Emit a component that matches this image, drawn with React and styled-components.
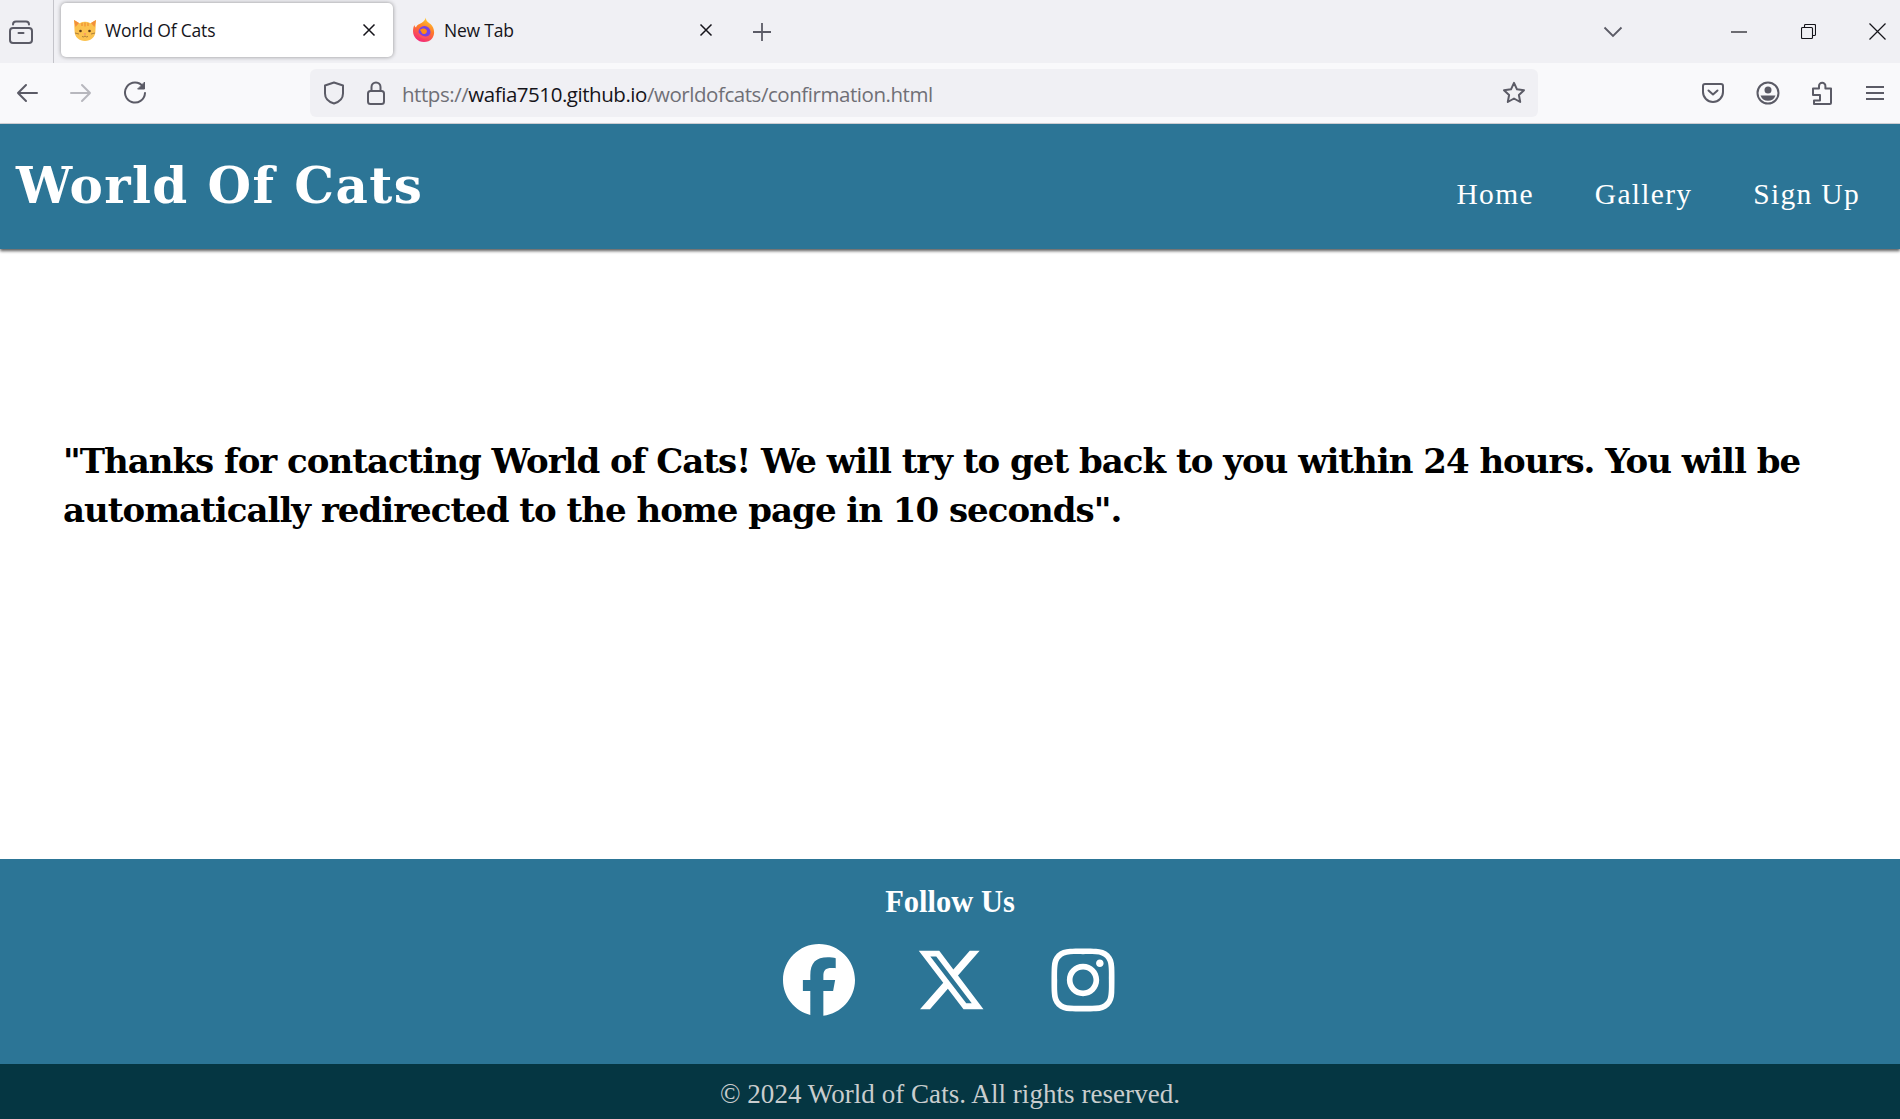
import React from 'react';
import styled, { createGlobalStyle } from 'styled-components';
import { FaFacebook, FaXTwitter, FaInstagram } from 'react-icons/fa6';

const GlobalStyle = createGlobalStyle`
  html, body {
    margin: 0;
    padding: 0;
    background: #fff;
  }
  * {
    box-sizing: border-box;
  }
`;

const Page = styled.div`
  display: flex;
  flex-direction: column;
  height: 1119px;
  overflow: hidden;
`;

const TabStrip = styled.div`
  display: flex;
  align-items: center;
  height: 63px;
  background: #f0f0f4;
  color: #15141a;
`;

const TabsButton = styled.div`
  display: flex;
  align-items: center;
  justify-content: center;
  width: 54px;
  height: 63px;
  padding-right: 12px;
  border-right: 1px solid #c4c4ca;
`;

const Tab = styled.div`
  display: flex;
  align-items: center;
  width: ${props => props.width}px;
  height: 54px;
  margin: 0 0 3px 7px;
  padding: 0 17px 0 12px;
  border-radius: 5px;
  font-family: "Open Sans", sans-serif;
  font-size: 17.5px;
  letter-spacing: -0.2px;
  background: ${props => (props.active ? '#fff' : 'transparent')};
  box-shadow: ${props => (props.active ? '0 0 4px rgba(0, 0, 0, 0.4)' : 'none')};
`;

const TabIcon = styled.span`
  display: flex;
  width: 32px;
  flex-shrink: 0;
`;

const TabTitle = styled.span`
  flex: 1;
  white-space: nowrap;
`;

const PlusButton = styled.div`
  display: flex;
  margin-left: 22px;
`;

const StripSpacer = styled.div`
  flex: 1;
`;

const Chevron = styled.div`
  display: flex;
  margin-right: 93px;
`;

const WindowButtons = styled.div`
  display: flex;
  gap: 23px;
`;

const WindowButton = styled.div`
  display: flex;
  align-items: center;
  justify-content: center;
  width: 46px;
  height: 58px;
`;

const Toolbar = styled.div`
  display: flex;
  align-items: center;
  height: 61px;
  padding-left: 16px;
  background: #f9f9fb;
  border-bottom: 1px solid #d5d5da;
`;

const NavIcon = styled.div`
  display: flex;
  width: 53.5px;
  flex-shrink: 0;
`;

const UrlBar = styled.div`
  display: flex;
  align-items: center;
  width: 1228px;
  height: 48px;
  margin-left: 133.5px;
  padding: 0 12px 0 13px;
  border-radius: 6px;
  background: #f0f0f4;
`;

const UrlIcon = styled.div`
  display: flex;
  margin-right: ${props => props.gap}px;
`;

const UrlText = styled.div`
  flex: 1;
  padding-top: 1px;
  font-family: "Open Sans", sans-serif;
  font-size: 20.5px;
  letter-spacing: -0.45px;
  color: #6f6f76;
  white-space: nowrap;
`;

const UrlHost = styled.span`
  color: #15141a;
`;

const ToolIcons = styled.div`
  display: flex;
  align-items: center;
  gap: 31.5px;
  margin-left: 164px;
`;

const SiteHeader = styled.header`
  position: relative;
  display: flex;
  justify-content: space-between;
  height: 125px;
  padding: 0 40px 0 16px;
  background: #2c7596;
  box-shadow: 0 2px 3px rgba(0, 0, 0, 0.65);
`;

const Logo = styled.h1`
  margin: 32px 0 0;
  font-family: "DejaVu Serif", serif;
  font-size: 50px;
  font-weight: 700;
  line-height: 60px;
  letter-spacing: 1.4px;
  color: #fff;
`;

const Nav = styled.nav`
  display: flex;
  align-items: center;
  gap: 61px;
  padding-top: 16px;
  height: 100%;
`;

const NavLink = styled.a`
  font-family: "Liberation Serif", serif;
  font-size: 29.5px;
  letter-spacing: 1.3px;
  color: #fff;
`;

const Main = styled.main`
  flex: 1;
  padding: 188px 63px 0;
`;

const Message = styled.p`
  margin: 0;
  font-family: "DejaVu Serif", serif;
  font-size: 34px;
  font-weight: 700;
  line-height: 49px;
  letter-spacing: -1px;
  color: #000;
`;

const Footer = styled.footer`
  display: flex;
  flex-direction: column;
  align-items: center;
  height: 205px;
  padding-top: 25px;
  background: #2c7596;
  color: #fff;
`;

const FollowTitle = styled.h3`
  margin: 0 0 24px;
  font-family: "Liberation Serif", serif;
  font-size: 30.5px;
  font-weight: 700;
  line-height: 36px;
`;

const Socials = styled.div`
  display: flex;
  align-items: center;
  gap: 60px;
  padding-left: 2px;
  font-size: 72px;
  color: #fff;
`;

const SocialLink = styled.a`
  display: flex;
  color: inherit;
`;

const Copyright = styled.div`
  display: flex;
  align-items: center;
  justify-content: center;
  height: 55px;
  padding-top: 6px;
  background: #053642;
  font-family: "Liberation Serif", serif;
  font-size: 27px;
  letter-spacing: 0.05px;
  color: #c9cdce;
`;

const stroke = { fill: 'none', stroke: '#5b5b66', strokeWidth: 2, strokeLinecap: 'round', strokeLinejoin: 'round' };

function CatIcon() {
  return (
    <svg width="24" height="24" viewBox="0 0 24 24">
      <path d="M1 2l5.500 3.200a11 10 0 0 1 11 0L23 2l-.6 11.500C22.400 19 17.800 23 12 23S1.600 19 1.600 13.500z" fill="#fbc24f" />
      <path d="M1 2l5 3-3.500 4zM23 2l-5 3 3.500 4z" fill="#f28f3b" />
      <path d="M12 4.500v4M9 5v3M15 5v3" stroke="#ef9135" strokeWidth="1.300" />
      <circle cx="7.500" cy="13" r="1.300" fill="#5d3a1a" />
      <circle cx="16.500" cy="13" r="1.300" fill="#5d3a1a" />
      <path d="M10.800 15.500h2.400L12 17z" fill="#f4727d" />
      <path d="M9 18.500q1.500 1 3-.5q1.500 1.500 3 .5M2 15l4 1M22 15l-4 1" fill="none" stroke="#8a6230" strokeWidth=".7" />
    </svg>
  );
}

function FirefoxIcon() {
  return (
    <svg width="24" height="26" viewBox="0 0 24 26">
      <defs>
        <linearGradient id="ffBody" x1="0.700" y1="0" x2="0.300" y2="1">
          <stop offset="0" stopColor="#ffd02e" />
          <stop offset="0.450" stopColor="#ff7a2a" />
          <stop offset="1" stopColor="#f3247e" />
        </linearGradient>
      </defs>
      <path d="M14 .5c-.5 3.500 2.500 5 4.500 6.500 6 5 5 18-6.500 18C5.500 25 1 20 1 14c0-2 .5-4.500 1.500-6 0 1 .5 2 1.500 2.500.5-2 2-3 3.500-3.500C11 5.500 13 3.500 14 .5z" fill="url(#ffBody)" />
      <circle cx="12.500" cy="15" r="6" fill="#7542e5" />
      <path d="M8 13c2-2 5-2 6.500 0 1 1.500 0 4-2.500 4-1.500 0-2.500-1-2.500-2" fill="#ff8a16" />
      <path d="M6 15c0 4 3 6.500 6.500 6.500 3 0 5.500-2 6-5-1.500 2.500-4.500 3.500-7 2.500C9.500 18.500 8 17 6 15z" fill="#ff4f5e" />
    </svg>
  );
}

function CloseIcon() {
  return (
    <svg width="14" height="14" viewBox="0 0 14 14">
      <path d="M1.500 1.500l11 11M12.500 1.500l-11 11" fill="none" stroke="#15141a" strokeWidth="1.500" />
    </svg>
  );
}

export default function App() {
  return (
    <Page>
      <GlobalStyle />
      <TabStrip>
        <TabsButton>
          <svg width="26" height="26" viewBox="0 0 26 26" {...stroke}>
            <rect x="2" y="9" width="22" height="15" rx="3" />
            <path d="M5 5.500q0-3 3-3h10q3 0 3 3" />
            <path d="M10.500 14h5" />
          </svg>
        </TabsButton>
        <Tab width={332} active>
          <TabIcon><CatIcon /></TabIcon>
          <TabTitle>World Of Cats</TabTitle>
          <CloseIcon />
        </Tab>
        <Tab width={330}>
          <TabIcon><FirefoxIcon /></TabIcon>
          <TabTitle>New Tab</TabTitle>
          <CloseIcon />
        </Tab>
        <PlusButton>
          <svg width="20" height="20" viewBox="0 0 20 20">
            <path d="M10 1v18M1 10h18" stroke="#5b5b66" strokeWidth="1.800" />
          </svg>
        </PlusButton>
        <StripSpacer />
        <Chevron>
          <svg width="20" height="12" viewBox="0 0 20 12">
            <path d="M1.500 1.500L10 10l8.500-8.500" fill="none" stroke="#5b5b66" strokeWidth="1.800" />
          </svg>
        </Chevron>
        <WindowButtons>
          <WindowButton>
            <svg width="16" height="2" viewBox="0 0 16 2"><path d="M0 1h16" stroke="#15141a" strokeWidth="1.200" /></svg>
          </WindowButton>
          <WindowButton>
            <svg width="15" height="15" viewBox="0 0 15 15" fill="none" stroke="#15141a" strokeWidth="1.100">
              <rect x=".5" y="3.500" width="11" height="11" rx="1" />
              <path d="M3.500 3.500v-2q0-1 1-1h9q1 0 1 1v9q0 1-1 1h-2" />
            </svg>
          </WindowButton>
          <WindowButton>
            <svg width="17" height="17" viewBox="0 0 17 17">
              <path d="M.5.500l16 16M16.500.500l-16 16" stroke="#15141a" strokeWidth="1.200" />
            </svg>
          </WindowButton>
        </WindowButtons>
      </TabStrip>

      <Toolbar>
        <NavIcon>
          <svg width="22" height="20" viewBox="0 0 22 20" {...stroke}>
            <path d="M21 10H2M10 2l-8 8 8 8" />
          </svg>
        </NavIcon>
        <NavIcon>
          <svg width="22" height="20" viewBox="0 0 22 20" {...stroke} stroke="#b7b7bd">
            <path d="M1 10h19M12 2l8 8-8 8" />
          </svg>
        </NavIcon>
        <NavIcon>
          <svg width="24" height="24" viewBox="0 0 24 24" {...stroke}>
            <path d="M20 5.500A10 10 0 1 0 22 12" />
            <path d="M21.500 1.500v6.500H15z" fill="#5b5b66" strokeWidth="1" />
          </svg>
        </NavIcon>
        <UrlBar>
          <UrlIcon gap={21}>
            <svg width="22" height="24" viewBox="0 0 22 24" {...stroke}>
              <path d="M11 1.500l9 3v8c0 5-4 8.500-9 10-5-1.500-9-5-9-10v-8z" />
            </svg>
          </UrlIcon>
          <UrlIcon gap={16}>
            <svg width="20" height="24" viewBox="0 0 20 24" {...stroke}>
              <rect x="2" y="10" width="16" height="13" rx="2.500" />
              <path d="M5.500 10V6a4.500 4.500 0 0 1 9 0v4" />
            </svg>
          </UrlIcon>
          <UrlText>
            https://<UrlHost>wafia7510.github.io</UrlHost>/worldofcats/confirmation.html
          </UrlText>
          <svg width="24" height="24" viewBox="0 0 24 24" {...stroke}>
            <path d="M12 1.800l3 6.500 7 .9-5.100 4.800 1.300 7-6.200-3.500-6.200 3.500 1.300-7L2 9.200l7-.9z" />
          </svg>
        </UrlBar>
        <ToolIcons>
          <svg width="22" height="20" viewBox="0 0 22 20" {...stroke}>
            <path d="M3 1h16q2 0 2 2v6a10 10 0 0 1-20 0V3q0-2 2-2z" />
            <path d="M6.500 7.500l4.500 4 4.500-4" />
          </svg>
          <svg width="24" height="24" viewBox="0 0 24 24" {...stroke}>
            <circle cx="12" cy="12" r="10.500" />
            <circle cx="12" cy="9" r="3.500" fill="#5b5b66" stroke="none" />
            <path d="M4.500 14.500h15a8 8 0 0 1-15 0z" fill="#5b5b66" stroke="none" />
          </svg>
          <svg width="22" height="24" viewBox="0 0 22 24" {...stroke}>
            <path d="M2 11V7.500h6V5a3.200 3.200 0 0 1 6.400 0v2.500H20V22a1 1 0 0 1-1 1H3v-3.500h6V14H2z" />
          </svg>
          <svg width="20" height="16" viewBox="0 0 20 16" stroke="#5b5b66" strokeWidth="1.800">
            <path d="M1 2h18M1 8h18M1 14h18" />
          </svg>
        </ToolIcons>
      </Toolbar>

      <SiteHeader>
        <Logo>World Of Cats</Logo>
        <Nav>
          <NavLink>Home</NavLink>
          <NavLink>Gallery</NavLink>
          <NavLink>Sign Up</NavLink>
        </Nav>
      </SiteHeader>

      <Main>
        <Message>
          "Thanks for contacting World of Cats! We will try to get back to you within 24 hours. You will be automatically redirected to the home page in 10 seconds".
        </Message>
      </Main>

      <Footer>
        <FollowTitle>Follow Us</FollowTitle>
        <Socials>
          <SocialLink><FaFacebook /></SocialLink>
          <SocialLink><FaXTwitter /></SocialLink>
          <SocialLink><FaInstagram /></SocialLink>
        </Socials>
      </Footer>
      <Copyright>© 2024 World of Cats. All rights reserved.</Copyright>
    </Page>
  );
}
